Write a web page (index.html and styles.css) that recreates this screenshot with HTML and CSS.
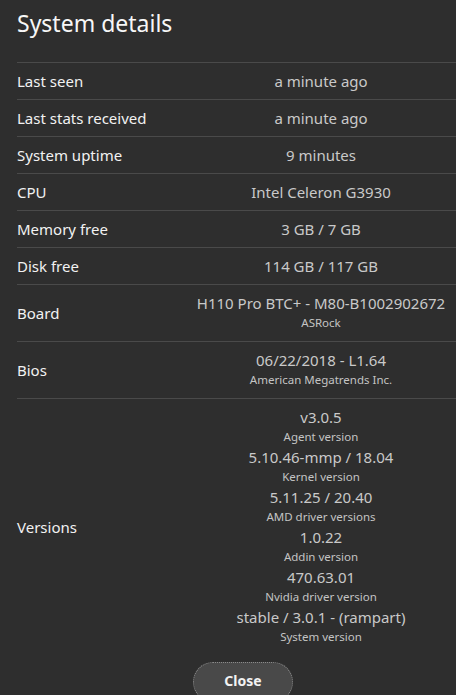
FILE: index.html
```html
<!DOCTYPE html>
<html lang="en">
  <head>
    <meta charset="UTF-8">
    <title>System details</title>
    <link rel="stylesheet" href="styles.css">
  </head>
  <body>
    <div class="dialog">
      <h1 class="title">System details</h1>
      <div class="details">
        <div class="row">
          <div class="label">Last seen</div>
          <div class="value"><div class="main">a minute ago</div></div>
        </div>
        <div class="row">
          <div class="label">Last stats received</div>
          <div class="value"><div class="main">a minute ago</div></div>
        </div>
        <div class="row">
          <div class="label">System uptime</div>
          <div class="value"><div class="main">9 minutes</div></div>
        </div>
        <div class="row">
          <div class="label">CPU</div>
          <div class="value"><div class="main">Intel Celeron G3930</div></div>
        </div>
        <div class="row">
          <div class="label">Memory free</div>
          <div class="value"><div class="main">3 GB / 7 GB</div></div>
        </div>
        <div class="row">
          <div class="label">Disk free</div>
          <div class="value"><div class="main">114 GB / 117 GB</div></div>
        </div>
        <div class="row">
          <div class="label">Board</div>
          <div class="value">
            <div class="main">H110 Pro BTC+ - M80-B1002902672</div>
            <div class="sub">ASRock</div>
          </div>
        </div>
        <div class="row">
          <div class="label">Bios</div>
          <div class="value">
            <div class="main">06/22/2018 - L1.64</div>
            <div class="sub">American Megatrends Inc.</div>
          </div>
        </div>
        <div class="row last">
          <div class="label">Versions</div>
          <div class="value">
            <div class="main">v3.0.5</div>
            <div class="sub">Agent version</div>
            <div class="main">5.10.46-mmp / 18.04</div>
            <div class="sub">Kernel version</div>
            <div class="main">5.11.25 / 20.40</div>
            <div class="sub">AMD driver versions</div>
            <div class="main">1.0.22</div>
            <div class="sub">Addin version</div>
            <div class="main">470.63.01</div>
            <div class="sub">Nvidia driver version</div>
            <div class="main">stable / 3.0.1 - (rampart)</div>
            <div class="sub">System version</div>
          </div>
        </div>
      </div>
      <div class="actions">
        <button class="close">Close</button>
      </div>
    </div>
  </body>
</html>
```

FILE: styles.css
```css
* {
  margin: 0;
  padding: 0;
  box-sizing: border-box;
}

body {
  background: #2e2e2e;
  font-family: "Noto Sans", "Open Sans", sans-serif;
  color: #f2f2f2;
  overflow: hidden;
}

.dialog {
  padding: 9px 0 0 17px;
}

.title {
  font-size: 23px;
  font-weight: 400;
  line-height: 28px;
  height: 53px;
  color: #f7f7f7;
}

.details {
  border-top: 1px solid #4a4a4a;
}

.row {
  display: grid;
  grid-template-columns: 169px 270px;
  align-items: center;
  border-bottom: 1px solid #4a4a4a;
  padding: 8px 0;
}

.row.last {
  border-bottom: none;
}

.label {
  font-size: 15px;
  line-height: 20px;
  color: #f2f2f2;
}

.value {
  text-align: center;
  white-space: nowrap;
}

.main {
  font-size: 15px;
  line-height: 20px;
  color: #c9c9c9;
}

.sub {
  font-size: 11.5px;
  line-height: 20px;
  color: #c4c4c4;
}

.actions {
  padding: 7px 0 0 176px;
}

.close {
  width: 100px;
  height: 40px;
  border-radius: 20px;
  background: #494949;
  border: 1px dotted #8a8a8a;
  color: #f2f2f2;
  font-family: inherit;
  font-size: 14px;
  font-weight: 700;
  padding-bottom: 4px;
}
```
